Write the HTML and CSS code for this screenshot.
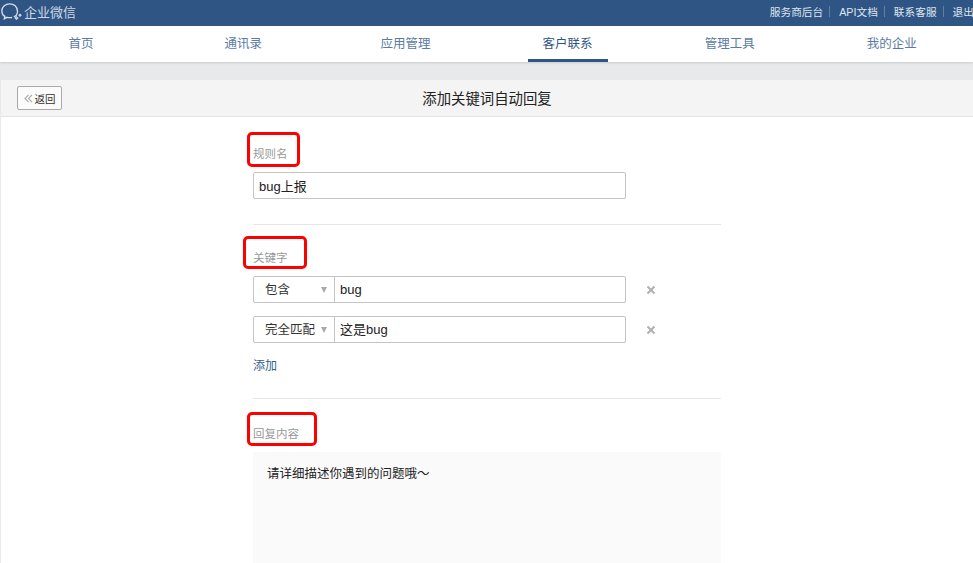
FILE: index.html
```html
<!DOCTYPE html>
<html lang="zh-CN">
<head>
  <meta charset="UTF-8" />
  <title>企业微信</title>
  <link rel="stylesheet" href="styles.css">
</head>
<body>
  <div class="topbar">
    <div class="brand">
      <svg class="brand-icon" width="22" height="17" viewBox="0 0 22 17" fill="none" stroke="#d5dde8" stroke-width="1.300">
        <path d="M13.800 13.900c2-.8 3.700-2.900 3.700-5.700C17.500 3.600 13.800 .8 9.700 .8S1.800 3.600 1.800 7.900c0 2.400 1.100 4.300 3 5.500l-.5 2.300 2.700-1.400c1.800.5 3.600.5 5.100.2" />
        <path d="M15.200 15l1.300-1.300 1.300 1.300-1.300 1.300zM19 12.300l1-1 1 1-1 1z" stroke-width="1.100" />
      </svg>
      <span>企业微信</span>
    </div>
    <div class="toplinks">
      <a>服务商后台</a><i></i><a>API文档</a><i></i><a>联系客服</a><i></i><a>退出</a>
    </div>
  </div>

  <div class="nav">
    <a>首页</a>
    <a>通讯录</a>
    <a>应用管理</a>
    <a class="active">客户联系</a>
    <a>管理工具</a>
    <a>我的企业</a>
  </div>

  <div class="main">
    <div class="page-head">
      <a class="back">
        <svg class="back-arrows" width="9" height="9" viewBox="0 0 9 9" fill="none" stroke="#aaa" stroke-width="1.100">
          <path d="M4.500 .8L1 4.500l3.500 3.700M8 .8L4.500 4.500 8 8.200" />
        </svg>
        <span>返回</span>
      </a>
      <h1>添加关键词自动回复</h1>
    </div>

    <div class="form">
      <div class="group first">
        <div class="label mark-name">规则名</div>
        <div class="input wide">bug上报</div>
      </div>

      <div class="group keywords">
        <div class="label mark-key">关键字</div>
        <div class="kw-row">
          <div class="kw-field">
            <div class="kw-select"><span>包含</span><b></b></div>
            <div class="kw-text">bug</div>
          </div>
          <svg class="kw-del" width="10" height="10" viewBox="0 0 10 10" stroke="#b0b0b0" stroke-width="2">
            <path d="M1.500 1.500l7 7M8.500 1.500l-7 7" />
          </svg>
        </div>
        <div class="kw-row">
          <div class="kw-field">
            <div class="kw-select"><span>完全匹配</span><b></b></div>
            <div class="kw-text">这是bug</div>
          </div>
          <svg class="kw-del" width="10" height="10" viewBox="0 0 10 10" stroke="#b0b0b0" stroke-width="2">
            <path d="M1.500 1.500l7 7M8.500 1.500l-7 7" />
          </svg>
        </div>
        <a class="add">添加</a>
      </div>

      <div class="group reply">
        <div class="label mark-reply">回复内容</div>
        <div class="reply-box">请详细描述你遇到的问题哦～</div>
      </div>
    </div>
  </div>
</body>
</html>
```

FILE: styles.css
```css
html, body {
  height: 100%;
}
body {
  margin: 0;
  height: 563px;
  overflow: hidden;
  background: #fff;
  color: #222;
  font-family: "Liberation Sans", "Noto Sans CJK SC", sans-serif;
  font-size: 12px;
}
.topbar {
  height: 26px;
  background: #2f5584;
  display: flex;
  align-items: center;
  justify-content: space-between;
  color: #dfe5ee;
}
.brand {
  display: flex;
  align-items: center;
  font-size: 13px;
  color: #cfd8e4;
  padding-bottom: 4px;
}
.brand-icon {
  margin-right: 2px;
}
.toplinks {
  display: flex;
  align-items: center;
  font-size: 10.700px;
  margin-right: -1px;
  padding-bottom: 4px;
}
.toplinks i {
  width: 1px;
  height: 11px;
  background: #62809f;
  margin: 0 9px 0 6px;
}
.nav {
  height: 36px;
  background: #fff;
  display: flex;
  justify-content: space-around;
  box-shadow: 0 1px 2px rgba(0, 0, 0, 0.12);
  position: relative;
}
.nav a {
  width: 80px;
  text-align: center;
  line-height: 37px;
  font-size: 12.500px;
  color: #5b7ba3;
  box-sizing: border-box;
}
.nav a.active {
  color: #2f5584;
  border-bottom: 3px solid #2f5584;
}
.main {
  background: #e8e9eb;
  padding: 18px 0 0 1px;
}
.page-head {
  height: 36px;
  background: #f4f4f4;
  border-bottom: 1px solid #e0e4ea;
  display: flex;
  align-items: center;
  justify-content: center;
  position: relative;
}
.page-head h1 {
  margin: 0;
  padding-bottom: 2px;
  font-size: 14.400px;
  font-weight: normal;
  color: #222;
}
.back {
  position: absolute;
  left: 16px;
  top: 6px;
  width: 43px;
  height: 22px;
  border: 1px solid #aaa;
  border-radius: 2px;
  background: #fbfbfb;
  display: flex;
  align-items: center;
  justify-content: center;
  font-size: 10.500px;
  color: #333;
}
.back-arrows {
  margin-right: 2px;
}
.form {
  background: #fff;
  height: 446px;
  padding-left: 252px;
}
.group {
  width: 468px;
  position: relative;
}
.group.first {
  padding-top: 30px;
  height: 77px;
  border-bottom: 1px solid #e6e6e6;
}
.group.keywords {
  padding-top: 26px;
  height: 147px;
  border-bottom: 1px solid #e6e6e6;
}
.group.reply {
  padding-top: 28px;
}
.label {
  color: #999;
  font-size: 11.500px;
  line-height: 14px;
  margin-bottom: 11px;
}
.label::before {
  content: "";
  position: absolute;
  border: 3px solid #f00;
  border-radius: 5px;
  box-sizing: border-box;
}
.mark-name::before {
  left: -6px;
  top: 15px;
  width: 53px;
  height: 35px;
}
.mark-key::before {
  left: -10px;
  top: 11px;
  width: 64px;
  height: 33px;
}
.mark-reply::before {
  left: -6px;
  top: 13px;
  width: 70px;
  height: 34px;
}
.input {
  box-sizing: border-box;
  height: 27px;
  line-height: 27px;
  border: 1px solid #c4c4c4;
  border-radius: 2px;
  padding-left: 5px;
  font-size: 13px;
}
.input.wide {
  width: 373px;
}
.kw-row {
  display: flex;
  align-items: center;
  margin-bottom: 13px;
}
.kw-field {
  box-sizing: border-box;
  width: 373px;
  height: 27px;
  border: 1px solid #c4c4c4;
  border-radius: 2px;
  display: flex;
  line-height: 26px;
  font-size: 13px;
}
.kw-select {
  border-right: 1px solid #c4c4c4;
  position: relative;
  padding-left: 11px;
  width: 69px;
  font-size: 12.500px;
  color: #333;
}
.kw-select b {
  position: absolute;
  right: 7px;
  top: 10px;
  border-left: 3px solid transparent;
  border-right: 3px solid transparent;
  border-top: 6px solid #aaa;
}
.kw-text {
  padding-left: 5px;
}
.kw-del {
  margin-left: 20px;
}
.add {
  color: #2f5f90;
  display: block;
  margin-top: 15px;
  line-height: 16px;
}
.reply-box {
  background: #fafafa;
  height: 112px;
  padding: 13px 14px;
  box-sizing: border-box;
  font-size: 12.500px;
  line-height: 18px;
  color: #222;
}
```
